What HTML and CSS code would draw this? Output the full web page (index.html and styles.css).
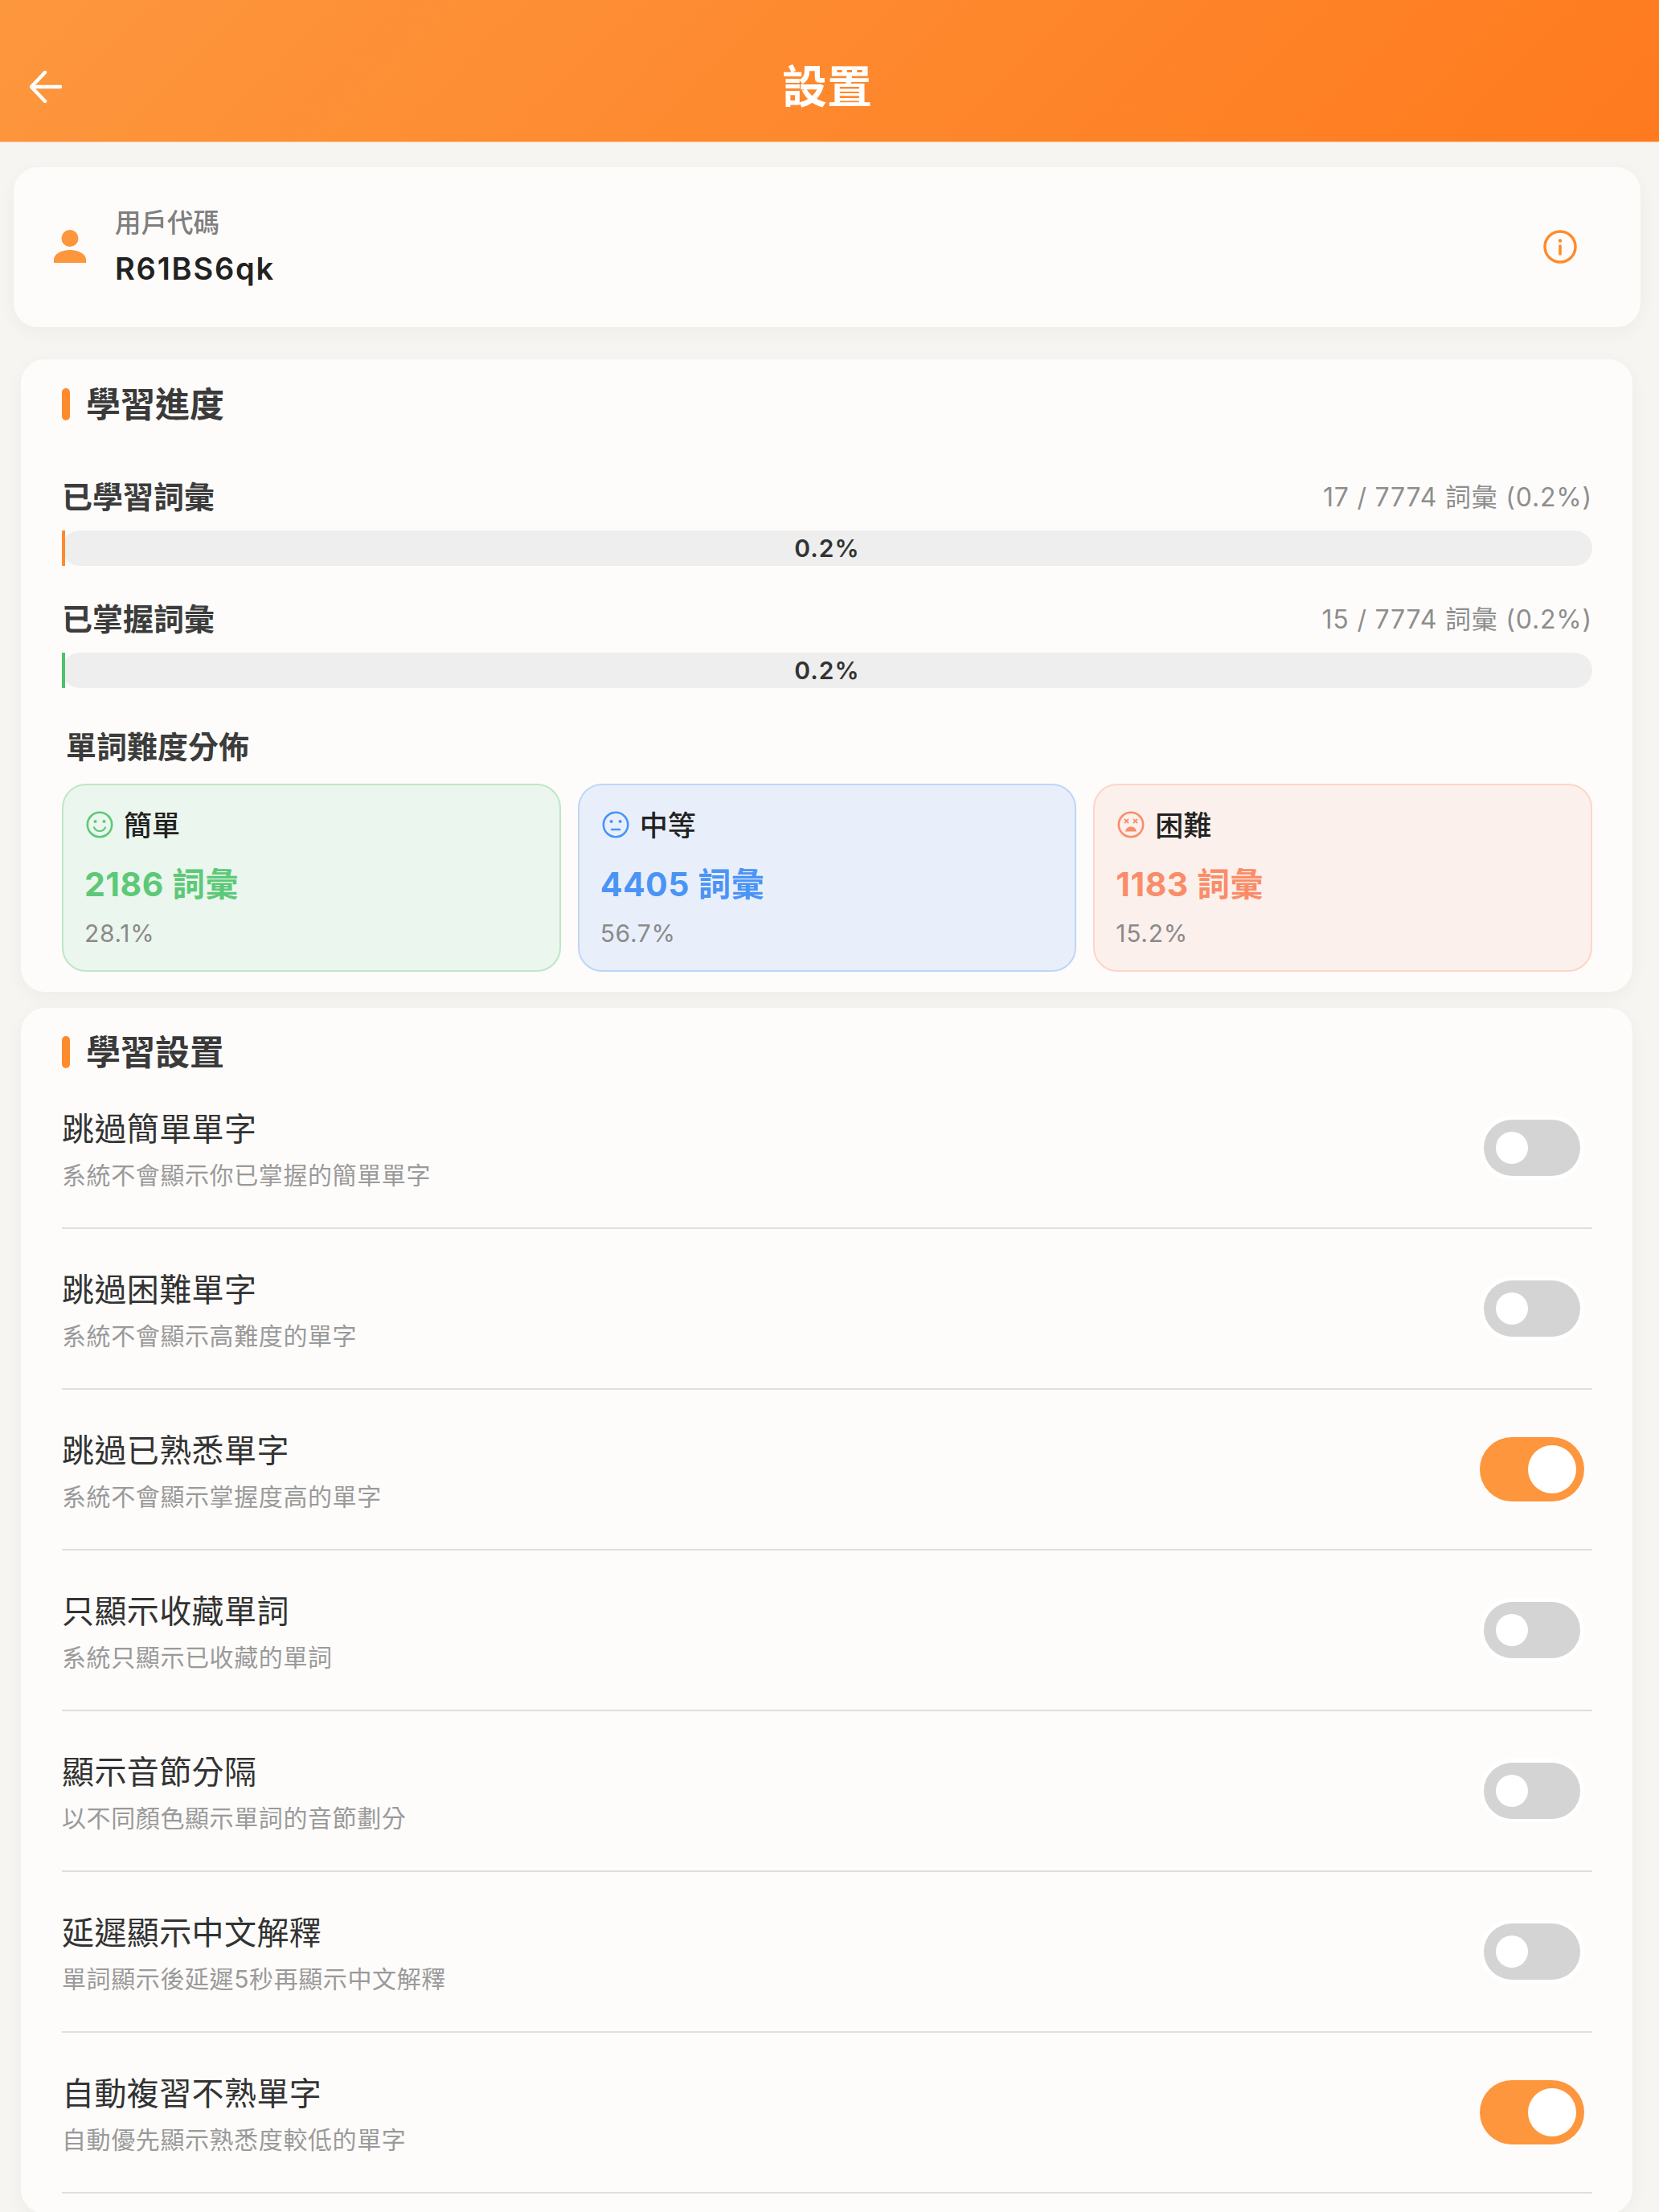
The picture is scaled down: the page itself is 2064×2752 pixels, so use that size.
FILE: index.html
```html
<!DOCTYPE html>
<html lang="zh-Hant">
<head>
<meta charset="utf-8">
<title>設置</title>
<link rel="stylesheet" href="styles.css">
</head>
<body>
<div class="page">
  <header class="topbar">
    <button class="back" aria-label="返回">
      <svg viewBox="0 0 40 40" width="40" height="40" fill="none" stroke="#fff" stroke-width="4.5" stroke-linecap="round" stroke-linejoin="round"><path d="M38 20H2M19 2 2 20l17 18"/></svg>
    </button>
    <h1 class="topbar-title">設置</h1>
    <div></div>
  </header>

  <section class="user-card">
    <svg class="user-icon" viewBox="0 0 40 41" width="40" height="41"><ellipse cx="20" cy="10.5" rx="10.5" ry="10.5" fill="#fd963c"/><path d="M0 41v-4C0 30 9 25 20 25s20 5 20 12v4z" fill="#fd963c"/></svg>
    <div class="user-text">
      <div class="user-label">用戶代碼</div>
      <div class="user-code">R61BS6qk</div>
    </div>
    <svg class="info-icon" viewBox="0 0 42 42" width="42" height="42" fill="none"><circle cx="21" cy="21" r="19" stroke="#ff8a2c" stroke-width="3.5"/><circle cx="21" cy="13.5" r="2.2" fill="#ff8a2c"/><path d="M21 20v10" stroke="#ff8a2c" stroke-width="3.6" stroke-linecap="round"/></svg>
  </section>

  <section class="panel progress-panel">
    <h2 class="panel-title">學習進度</h2>
    <div class="progress-head first">
      <span class="progress-name">已學習詞彙</span>
      <span class="progress-count">17 / 7774 詞彙 (0.2%)</span>
    </div>
    <div class="track"><div class="fill fill-orange" style="width:0.2%"></div><span class="track-label">0.2%</span></div>
    <div class="progress-head">
      <span class="progress-name">已掌握詞彙</span>
      <span class="progress-count">15 / 7774 詞彙 (0.2%)</span>
    </div>
    <div class="track"><div class="fill fill-green" style="width:0.2%"></div><span class="track-label">0.2%</span></div>

    <h3 class="dist-title">單詞難度分佈</h3>
    <div class="dist-grid">
      <div class="stat stat-green">
        <div class="stat-head">
          <svg viewBox="0 0 34 34" width="34" height="34" fill="none" stroke="currentColor"><circle cx="17" cy="17" r="15.2" stroke-width="2.6"/><circle cx="11.5" cy="13" r="2" fill="currentColor" stroke="none"/><circle cx="22.5" cy="13" r="2" fill="currentColor" stroke="none"/><path d="M10 20.5c1.5 3 4 4.5 7 4.5s5.500-1.500 7-4.500" stroke-width="2.200" stroke-linecap="round"/></svg>
          <span class="stat-name">簡單</span>
        </div>
        <div class="stat-count">2186 詞彙</div>
        <div class="stat-pct">28.1%</div>
      </div>
      <div class="stat stat-blue">
        <div class="stat-head">
          <svg viewBox="0 0 34 34" width="34" height="34" fill="none" stroke="currentColor"><circle cx="17" cy="17" r="15.2" stroke-width="2.6"/><circle cx="11.500" cy="13" r="2" fill="currentColor" stroke="none"/><circle cx="22.500" cy="13" r="2" fill="currentColor" stroke="none"/><path d="M12 23h10" stroke-width="2.400" stroke-linecap="round"/></svg>
          <span class="stat-name">中等</span>
        </div>
        <div class="stat-count">4405 詞彙</div>
        <div class="stat-pct">56.7%</div>
      </div>
      <div class="stat stat-red">
        <div class="stat-head">
          <svg viewBox="0 0 34 34" width="34" height="34" fill="none" stroke="currentColor"><circle cx="17" cy="17" r="15.2" stroke-width="2.6"/><path d="M9.500 10.500l4 4M13.500 10.500l-4 4M20.500 10.500l4 4M24.500 10.500l-4 4" stroke-width="1.800" stroke-linecap="round"/><path d="M10 25.500c.8-4 3.500-6 7-6s6.200 2 7 6z" fill="currentColor" stroke="none"/></svg>
          <span class="stat-name">困難</span>
        </div>
        <div class="stat-count">1183 詞彙</div>
        <div class="stat-pct">15.2%</div>
      </div>
    </div>
  </section>

  <section class="panel settings-panel">
    <h2 class="panel-title">學習設置</h2>
    <div class="row">
      <div class="row-text"><div class="row-label">跳過簡單單字</div><div class="row-sub">系統不會顯示你已掌握的簡單單字</div></div>
      <div class="toggle off"><span class="knob"></span></div>
    </div>
    <div class="row">
      <div class="row-text"><div class="row-label">跳過困難單字</div><div class="row-sub">系統不會顯示高難度的單字</div></div>
      <div class="toggle off"><span class="knob"></span></div>
    </div>
    <div class="row">
      <div class="row-text"><div class="row-label">跳過已熟悉單字</div><div class="row-sub">系統不會顯示掌握度高的單字</div></div>
      <div class="toggle on"><span class="knob"></span></div>
    </div>
    <div class="row">
      <div class="row-text"><div class="row-label">只顯示收藏單詞</div><div class="row-sub">系統只顯示已收藏的單詞</div></div>
      <div class="toggle off"><span class="knob"></span></div>
    </div>
    <div class="row">
      <div class="row-text"><div class="row-label">顯示音節分隔</div><div class="row-sub">以不同顏色顯示單詞的音節劃分</div></div>
      <div class="toggle off"><span class="knob"></span></div>
    </div>
    <div class="row">
      <div class="row-text"><div class="row-label">延遲顯示中文解釋</div><div class="row-sub">單詞顯示後延遲5秒再顯示中文解釋</div></div>
      <div class="toggle off"><span class="knob"></span></div>
    </div>
    <div class="row">
      <div class="row-text"><div class="row-label">自動複習不熟單字</div><div class="row-sub">自動優先顯示熟悉度較低的單字</div></div>
      <div class="toggle on"><span class="knob"></span></div>
    </div>
  </section>
</div>
</body>
</html>
```
FILE: styles.css
```css
* { box-sizing: border-box; }
html, body { margin: 0; padding: 0; }
body {
  font-family: Inter, "Noto Sans CJK TC", "Noto Sans", sans-serif;
  background: #f6f5f1;
  color: #333;
}
.page {
  height: 2752px;
  overflow: hidden;
  display: flex;
  flex-direction: column;
}

/* top bar */
.topbar {
  flex: none;
  height: 177px;
  display: grid;
  grid-template-columns: 1fr auto 1fr;
  align-items: center;
  padding: 39px 43px 0 37px;
  background: linear-gradient(135deg, #fd973e 0%, #ff7a1e 100%);
  border-bottom: 1px solid #fdc08c;
}
.back {
  width: 40px;
  height: 40px;
  padding: 0;
  border: 0;
  background: none;
  display: block;
}
.back svg { display: block; }
.topbar-title {
  margin: 0;
  font-size: 56px;
  line-height: 70px;
  font-weight: 700;
  color: #fff;
}

/* user card */
.user-card {
  flex: none;
  margin: 31px 23px 0 17px;
  height: 199px;
  padding: 0 79px 0 50px;
  display: flex;
  align-items: center;
  background: #fdfcfa;
  border-radius: 30px;
  box-shadow: 0 6px 22px rgba(60, 50, 30, .045);
}
.user-icon { flex: none; margin-top: -2px; }
.user-text { flex: 1; margin-left: 36px; margin-top: -1px; }
.user-label {
  font-size: 32.5px;
  line-height: 44px;
  font-weight: 500;
  color: #7f7f7f;
}
.user-code {
  margin-top: 10px;
  font-size: 38px;
  line-height: 48px;
  font-weight: 600;
  letter-spacing: 1.8px;
  color: #222;
}
.info-icon { flex: none; margin-top: -2px; }

/* panels */
.panel {
  flex: none;
  margin: 0 33px 0 26px;
  padding: 36px 50px 25px 51px;
  background: #fdfcfa;
  border-radius: 30px;
  box-shadow: 0 6px 22px rgba(60, 50, 30, .045);
}
.progress-panel { margin-top: 40px; }
.settings-panel { margin-top: 20px; padding-top: 35px; flex: 1; }
.panel-title {
  position: relative;
  margin: 0;
  padding-left: 30px;
  height: 40px;
  display: flex;
  align-items: center;
  font-size: 43px;
  line-height: 40px;
  font-weight: 600;
  color: #3a3a3a;
}
.panel-title::before {
  content: "";
  position: absolute;
  left: 0;
  top: 0;
  width: 10px;
  height: 40px;
  border-radius: 5px;
  background: #ff8a2c;
}

/* progress */
.progress-head {
  height: 50px;
  margin-top: 38px;
  margin-bottom: 20px;
  display: flex;
  justify-content: space-between;
  align-items: center;
}
.progress-head.first { margin-top: 67px; }
.progress-name {
  font-size: 38px;
  font-weight: 600;
  color: #3c3c3c;
}
.progress-count {
  font-size: 32px;
  letter-spacing: .8px;
  color: #8e8e8e;
  padding-top: 2px;
}
.track {
  position: relative;
  height: 44px;
  border-radius: 22px;
  background: #eeeeee;
  display: flex;
  align-items: center;
  justify-content: center;
}
.fill {
  position: absolute;
  left: 0;
  top: 0;
  bottom: 0;
}
.fill-orange { background: #ff8a2c; }
.fill-green { background: #4cc26c; }
.track-label {
  font-size: 30px;
  font-weight: 600;
  letter-spacing: 1px;
  color: #333;
}
.dist-title {
  margin: 48px 0 21px;
  padding-left: 5px;
  font-size: 38px;
  line-height: 50px;
  font-weight: 600;
  color: #3c3c3c;
}
.dist-grid {
  display: grid;
  grid-template-columns: repeat(3, 1fr);
  gap: 21px;
}
.stat {
  height: 234px;
  padding: 25px 26px 0;
  border: 2px solid;
  border-radius: 30px;
}
.stat-green { background: #ebf6ee; border-color: #bde7c6; color: #5cc977; }
.stat-blue { background: #e9effa; border-color: #bcd6f8; color: #4a94f5; }
.stat-red { background: #fcf0ec; border-color: #fcd5c9; color: #f98d69; }
.stat-head {
  height: 44px;
  display: flex;
  align-items: center;
  gap: 13px;
  margin-left: 2px;
}
.stat-head svg { flex: none; margin-top: 3px; }
.stat-name {
  font-size: 35px;
  font-weight: 500;
  color: #222;
}
.stat-count {
  margin-top: 26px;
  font-size: 41px;
  line-height: 56px;
  font-weight: 700;
  letter-spacing: .5px;
}
.stat-pct {
  margin-top: 13px;
  font-size: 30px;
  line-height: 40px;
  letter-spacing: .7px;
  color: #8a8a8a;
}

/* settings rows */
.row {
  height: 200px;
  display: flex;
  align-items: center;
  justify-content: space-between;
  border-bottom: 2px solid #dedfdc;
}
.row-label {
  padding-top: 2px;
  font-size: 40px;
  line-height: 56px;
  letter-spacing: .4px;
  color: #333;
}
.row-sub {
  margin-top: 9px;
  font-size: 30px;
  line-height: 40px;
  letter-spacing: .6px;
  color: #9a9a9a;
}
.toggle {
  flex: none;
  display: flex;
  align-items: center;
  border-radius: 40px;
}
.toggle.on {
  width: 130px;
  height: 80px;
  margin-right: 10px;
  padding-right: 10px;
  justify-content: flex-end;
  background: #fd963c;
}
.toggle.on .knob { width: 60px; height: 60px; }
.toggle.off {
  width: 120px;
  height: 70px;
  margin: 5px 15px 5px 0;
  padding-left: 15px;
  background: #d4d4d4;
  box-shadow: 0 0 0 5px #fff;
}
.toggle.off .knob { width: 40px; height: 40px; }
.knob {
  display: block;
  border-radius: 50%;
  background: #fff;
}
```
